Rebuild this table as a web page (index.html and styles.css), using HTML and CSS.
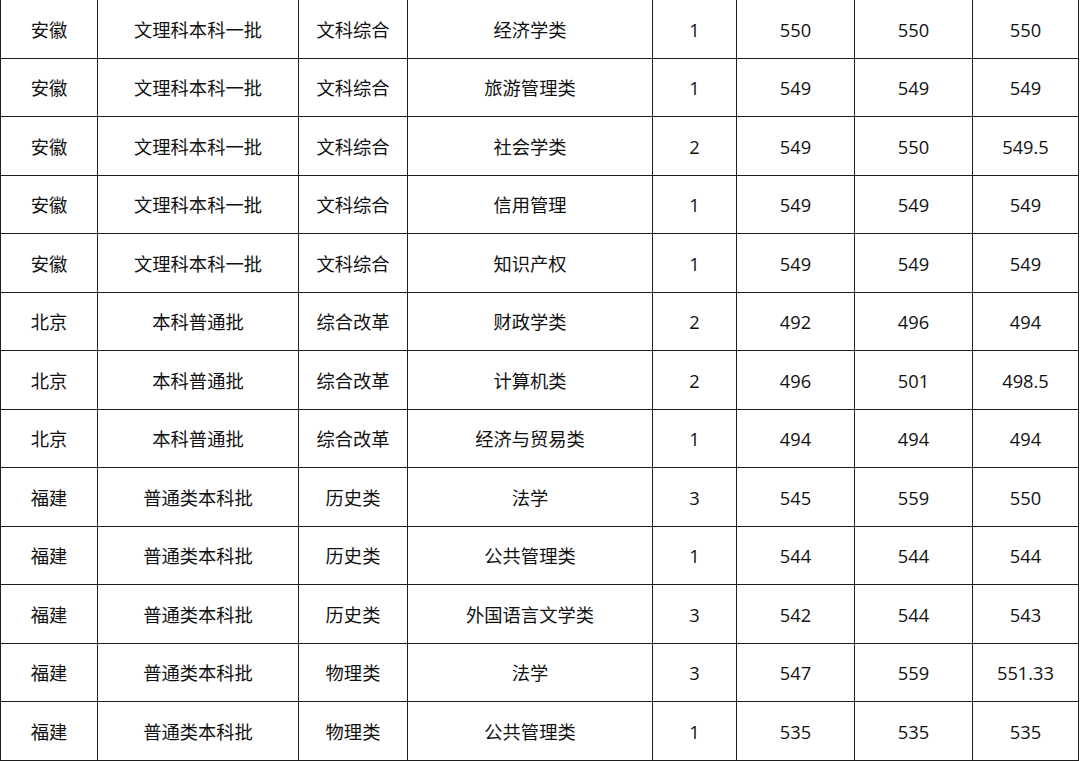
FILE: index.html
```html
<!DOCTYPE html>
<html lang="zh">
<head>
<meta charset="utf-8">
<link rel="stylesheet" href="styles.css">
</head>
<body>
<table class="score-table">
<colgroup>
<col class="c1"><col class="c2"><col class="c3"><col class="c4"><col class="c5"><col class="c6"><col class="c7"><col class="c8">
</colgroup>
<tbody>
<tr><td>安徽</td><td>文理科本科一批</td><td>文科综合</td><td>经济学类</td><td>1</td><td>550</td><td>550</td><td>550</td></tr>
<tr><td>安徽</td><td>文理科本科一批</td><td>文科综合</td><td>旅游管理类</td><td>1</td><td>549</td><td>549</td><td>549</td></tr>
<tr><td>安徽</td><td>文理科本科一批</td><td>文科综合</td><td>社会学类</td><td>2</td><td>549</td><td>550</td><td>549.5</td></tr>
<tr><td>安徽</td><td>文理科本科一批</td><td>文科综合</td><td>信用管理</td><td>1</td><td>549</td><td>549</td><td>549</td></tr>
<tr><td>安徽</td><td>文理科本科一批</td><td>文科综合</td><td>知识产权</td><td>1</td><td>549</td><td>549</td><td>549</td></tr>
<tr><td>北京</td><td>本科普通批</td><td>综合改革</td><td>财政学类</td><td>2</td><td>492</td><td>496</td><td>494</td></tr>
<tr><td>北京</td><td>本科普通批</td><td>综合改革</td><td>计算机类</td><td>2</td><td>496</td><td>501</td><td>498.5</td></tr>
<tr><td>北京</td><td>本科普通批</td><td>综合改革</td><td>经济与贸易类</td><td>1</td><td>494</td><td>494</td><td>494</td></tr>
<tr><td>福建</td><td>普通类本科批</td><td>历史类</td><td>法学</td><td>3</td><td>545</td><td>559</td><td>550</td></tr>
<tr><td>福建</td><td>普通类本科批</td><td>历史类</td><td>公共管理类</td><td>1</td><td>544</td><td>544</td><td>544</td></tr>
<tr><td>福建</td><td>普通类本科批</td><td>历史类</td><td>外国语言文学类</td><td>3</td><td>542</td><td>544</td><td>543</td></tr>
<tr><td>福建</td><td>普通类本科批</td><td>物理类</td><td>法学</td><td>3</td><td>547</td><td>559</td><td>551.33</td></tr>
<tr><td>福建</td><td>普通类本科批</td><td>物理类</td><td>公共管理类</td><td>1</td><td>535</td><td>535</td><td>535</td></tr>
</tbody>
</table>
</body>
</html>
```

FILE: styles.css
```css
html, body {
  margin: 0;
  padding: 0;
  background: #ffffff;
  overflow: hidden;
}

.score-table {
  margin-top: -1px;
  border-collapse: collapse;
  table-layout: fixed;
  width: 1079px;
  font-family: "Open Sans", "Noto Sans CJK SC", sans-serif;
  font-size: 18.3px;
  color: #111111;
}

.c1 { width: 97px; }
.c2 { width: 201px; }
.c3 { width: 109px; }
.c4 { width: 245px; }
.c5 { width: 84px; }
.c6 { width: 118px; }
.c7 { width: 118px; }
.c8 { width: 106px; }

.score-table tr {
  height: 58.5px;
}

.score-table td {
  border: 1px solid #1e1e1e;
  padding: 2px 0 0 0;
  text-align: center;
  vertical-align: middle;
  line-height: 1.2;
  white-space: nowrap;
}
```
